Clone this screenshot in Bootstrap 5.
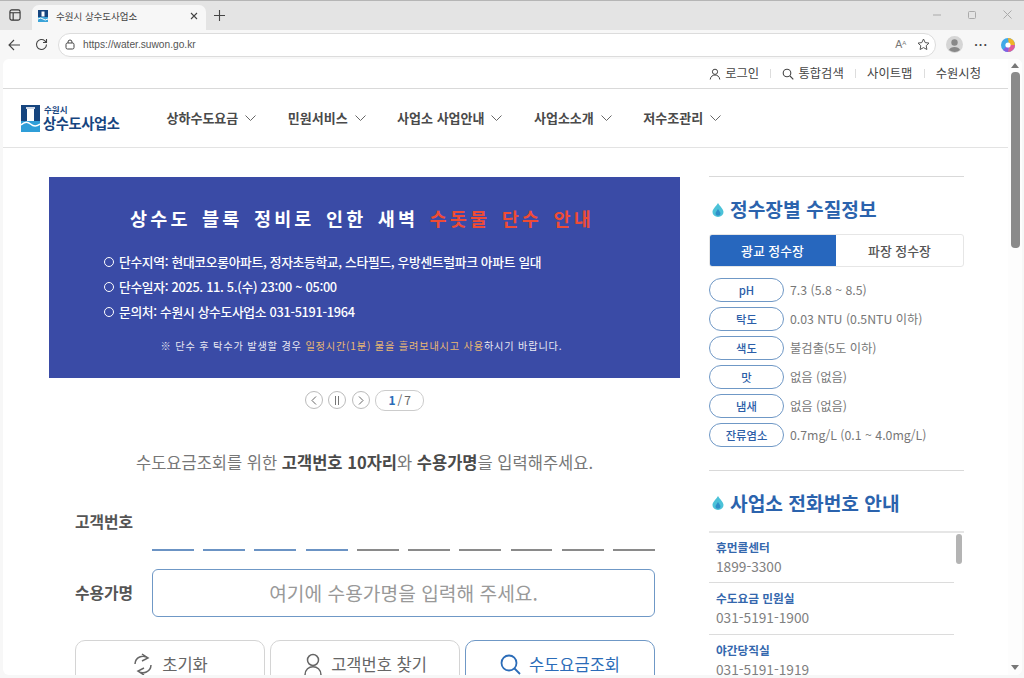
<!DOCTYPE html>
<html lang="ko">
<head>
<meta charset="utf-8">
<title>수원시 상수도사업소</title>
<link rel="stylesheet" href="https://cdn.jsdelivr.net/npm/bootstrap@5.3.2/dist/css/bootstrap.min.css">
<style>
html, body { height: 678px; overflow: hidden; }
body { font-family: "Noto Sans CJK KR", "Noto Sans", sans-serif; background: #f7f7f7; color: #555; }
.win { height: 678px; }
.tabstrip { height: 30px; background: #e4e4e4; border-top: 1px solid #b5b5b5; flex: none; }
.side-btn { width: 32px; padding: 8px 0 0 9px; }
.br-tab { width: 174px; height: 25px; margin-top: 4px; background: #f7f7f7; border-radius: 7px 7px 0 0; font-size: 9.5px; color: #444; padding: 0 8px 3px 6px; }
.tab-plus { margin: 9px 0 0 8px; }
.win-ctrl { gap: 27px; padding: 9px 12px 0 0; }
.toolbar { height: 29px; flex: none; padding: 0 8px; }
.back-ic { margin-right: 14px; }
.urlbox { height: 24px; border: 1px solid #dcdcdc; border-radius: 12px; background: #fff; margin: 0 10px 0 10px; padding: 0 5px 0 6px; font-size: 10.2px; color: #555; font-family: "Liberation Sans", sans-serif; }
.read-ic { font-size: 10.5px; color: #777; margin-right: 11px; }
.read-ic sup { font-size: 6px; }
.avatar-ic { margin-right: 11px; }
.more-ic { font-size: 11px; color: #444; letter-spacing: 1px; font-weight: 700; margin-right: 12px; }
.webview { margin: 0 2px 3px 3px; background: #fff; border-radius: 6px; min-height: 0; overflow: hidden; }
.page-col { min-width: 0; overflow: hidden; }
.utilbar { height: 30px; border-bottom: 1px solid #d9d9d9; font-size: 12.3px; color: #444; padding-right: 27px; flex: none; }
.utilbar .sep { width: 1px; height: 9px; background: #ddd; margin: 0 11.2px; }
.mainnav { height: 59px; border-bottom: 1px solid #e3e3e3; flex: none; padding-left: 18px; }
.logo-txt { color: #16457f; line-height: 1.15; margin-left: 3px; }
.logo-txt small { font-size: 8.5px; font-weight: 700; display: block; margin-left: 1px; }
.logo-txt b { font-size: 14.3px; font-weight: 700; letter-spacing: -.4px; display: block; }
.gnb { margin-left: 47px; gap: 31.5px; font-size: 13px; font-weight: 700; color: #4a4a4a; padding-bottom: 1px; }
.gnb span { gap: 7px; }
.content-wrap { padding: 29px 0 0 46px; gap: 29px; flex: none; }
.leftcol { width: 631px; flex: none; }
.banner { height: 201px; background: #3a4ba6; color: #fff; padding-top: 30px; }
.banner h2 { font-size: 18.5px; font-weight: 700; letter-spacing: 3.2px; word-spacing: 3px; margin: 0 0 20px; padding-right: 5px; text-align: center; }
.banner h2 em { font-style: normal; color: #ef4b35; }
.banner ul { list-style: none; margin: 0 0 0 55px; padding: 0; font-size: 12.75px; font-weight: 500; letter-spacing: -.3px; }
.banner li { height: 25px; display: flex; align-items: center; gap: 5px; }
.banner li i { width: 10px; height: 10px; border: 1.5px solid #fff; border-radius: 50%; }
.banner p { font-size: 10.2px; text-align: center; margin: 14px 0 0; letter-spacing: .8px; color: #e8e8f2; padding-right: 6px; }
.banner p em { font-style: normal; color: #e9b872; }
.slide-ctrl { height: 44px; gap: 5.5px; font-size: 12px; }
.round-btn { width: 18px; height: 18px; border: 1px solid #bbb; border-radius: 50%; background: #fff; display: flex; align-items: center; justify-content: center; }
.count-pill { width: 49px; height: 21px; border: 1px solid #ccc; border-radius: 10px; font-size: 12px; color: #666; }
.count-pill b { color: #2b6cb8; font-weight: 700; margin-right: 2px; }
.count-pill span { margin-right: 2px; }
.intro { font-size: 16.5px; text-align: center; color: #777; margin: 28px 0 0; line-height: 24px; }
.intro b { color: #4a4a4a; font-weight: 700; }
.billform { padding: 0 25px 0 26px; }
.flabel { width: 77px; font-size: 15.8px; font-weight: 700; color: #555; flex: none; }
.digits { gap: 9.4px; height: 45px; }
.digits i { flex: 1; height: 2px; background: #8a8a8a; }
.digits i.on { background: #6b93c4; }
.nameinput { height: 48px; border: 1px solid #6f98c6; border-radius: 6px; font-size: 19.2px; color: #999; }
.name-row { margin-top: 18px; }
.actbtns { gap: 5px; margin-top: 23px; }
.actbtn { width: 190px; height: 50px; border: 1px solid #d4d4d4; border-radius: 10px; font-size: 16.5px; color: #666; gap: 8px; background: #fff; padding-bottom: 2px; }
.actbtn.pri { border-color: #6f98c6; color: #2b6cb8; }
.sidecol { width: 255px; flex: none; margin-top: -1px; }
.sidehr { border-top: 1px solid #d9d9d9; }
.sidehead { font-size: 19.2px; font-weight: 700; color: #2b63ad; gap: 6px; height: 57px; padding: 8px 0 0 3px; }
.sidehead.second { height: 60px; padding-top: 4px; }
.wp-tabs { height: 33px; font-size: 12.9px; font-weight: 500; border: 1px solid #e6e6e6; border-radius: 3px; overflow: hidden; }
.wp-tabs div { flex: 1; color: #555; }
.wp-tabs div.on { background: #2767be; color: #fff; margin: -1px 0 -1px -1px; padding: 1px 0; }
.qlist { margin-top: 11px; gap: 5px; font-size: 12.3px; color: #777; height: 192px; }
.qrow { height: 24px; gap: 6px; }
.qpill { width: 75px; height: 24px; border: 1px solid #6f98c6; border-radius: 12px; color: #2b5ea8; font-weight: 500; font-size: 11.3px; flex: none; }
.telwrap { height: 200px; border-top: 2px solid #e6e6e6; gap: 2px; }
.tellist { width: 245px; flex: none; }
.telitem { height: 52px; padding: 5px 0 0 7px; border-bottom: 1px solid #dcdcdc; line-height: 20px; }
.telitem:first-child { height: 50px; padding-top: 4px; }
.telitem b { display: block; color: #3467ad; font-size: 11.7px; font-weight: 700; }
.telitem span { display: block; font-size: 13.7px; color: #808080; line-height: 19px; }
.tel-thumb { width: 6px; height: 30px; border-radius: 3px; background: #b4b4b4; margin-top: 1px; }
.vscroll { width: 14px; flex: none; background: #fdfdfd; padding: 4px 0 5px; }
.vscroll .thumb { width: 9px; height: 176px; background: #8a8a8a; border-radius: 4px; margin-top: 4px; }
</style>
</head>
<body>
<div class="win d-flex flex-column">
  <div class="tabstrip d-flex align-items-start">
    <div class="side-btn">
      <svg width="12" height="12" viewBox="0 0 13 13" fill="none" stroke="#333" stroke-width="1.2" class="d-block"><rect x="1" y="1" width="11" height="11" rx="2"/><path d="M1 4h11M4.500 4v8"/></svg>
    </div>
    <div class="br-tab d-flex align-items-center">
      <svg width="10" height="12" viewBox="0 0 10 12" class="me-2 flex-none"><rect width="10" height="7" fill="#16457f"/><rect x="3.500" y="1.500" width="3" height="5" fill="#fff"/><rect y="7" width="10" height="5" fill="#3aa3d8"/><path d="M0 9q3-2 5 0t5 0" stroke="#fff" fill="none"/></svg>
      <span class="flex-grow-1">수원시 상수도사업소</span>
      <svg width="8" height="8" viewBox="0 0 8 8" stroke="#444" stroke-width="1.100"><path d="M1 1l6 6M7 1l-6 6"/></svg>
    </div>
    <div class="tab-plus d-flex">
      <svg width="11" height="11" viewBox="0 0 11 11" stroke="#444" stroke-width="1.100"><path d="M5.500 0v11M0 5.500h11"/></svg>
    </div>
    <div class="ms-auto d-flex align-items-center win-ctrl">
      <svg width="8" height="8" viewBox="0 0 8 8" stroke="#aaa"><path d="M0 4h8"/></svg>
      <svg width="8" height="8" viewBox="0 0 8 8" stroke="#aaa" fill="none"><rect x=".5" y=".5" width="7" height="7" rx="1"/></svg>
      <svg width="9" height="9" viewBox="0 0 9 9" stroke="#aaa"><path d="M.5.5l8 8M8.500.5l-8 8"/></svg>
    </div>
  </div>
  <div class="toolbar d-flex align-items-center">
    <svg width="13" height="12" viewBox="0 0 13 12" fill="none" stroke="#444" stroke-width="1.100" class="back-ic"><path d="M12 6H1M6 1L1 6l5 5"/></svg>
    <svg width="13" height="13" viewBox="0 0 13 13" fill="none" stroke="#444" stroke-width="1.100"><path d="M11.500 6.500a5 5 0 1 1-1.600-3.700L11.500 4.500M11.500 1v3.500H8"/></svg>
    <div class="urlbox flex-grow-1 d-flex align-items-center">
      <svg width="10" height="11" viewBox="0 0 10 11" fill="none" stroke="#444" class="me-2"><rect x="1" y="4" width="8" height="6" rx="1.500"/><path d="M3 4V3a2 2 0 0 1 4 0v1"/></svg>
      <span class="flex-grow-1">https://water.suwon.go.kr</span>
      <span class="read-ic">A<sup>A</sup></span>
      <svg width="13" height="13" viewBox="0 0 13 13" fill="none" stroke="#555"><path d="M6.500 1l1.700 3.600 3.800.5-2.800 2.600.7 3.800-3.400-1.900-3.400 1.900.7-3.800L1 5.100l3.800-.5z"/></svg>
    </div>
    <svg width="17" height="17" viewBox="0 0 17 17" class="avatar-ic"><circle cx="8.500" cy="8.500" r="8.500" fill="#d5d5d5"/><circle cx="8.500" cy="6.500" r="3.200" fill="#888"/><path d="M3 14c1-4 10-4 11 0q-5 4-11 0z" fill="#888"/></svg>
    <span class="more-ic lh-1">···</span>
    <svg width="16" height="16" viewBox="0 0 16 16"><circle cx="8" cy="8" r="7" fill="#3fa9e8"/><path d="M8 1a7 7 0 0 1 7 7H9z" fill="#f0b429"/><path d="M15 8a7 7 0 0 1-7 7l1-7z" fill="#e25a9a"/><path d="M8 15a7 7 0 0 1-5-2l5-5z" fill="#8a5ce0"/><circle cx="8" cy="8" r="2.600" fill="#fff"/></svg>
  </div>

  <div class="webview flex-grow-1 d-flex">
    <div class="page-col flex-grow-1 d-flex flex-column">
      <div class="utilbar d-flex align-items-center justify-content-end">
        <svg width="12" height="12" viewBox="0 0 12 12" fill="none" stroke="#444" class="me-1"><circle cx="6" cy="3.800" r="2.600"/><path d="M1.200 11.500c.5-6 9.100-6 9.600 0"/></svg>
        <span>로그인</span><i class="sep"></i>
        <svg width="12" height="12" viewBox="0 0 12 12" fill="none" stroke="#444" stroke-width="1.100" class="me-1"><circle cx="5" cy="5" r="3.800"/><path d="M8 8l3.300 3.300"/></svg>
        <span>통합검색</span><i class="sep"></i>
        <span>사이트맵</span><i class="sep"></i>
        <span>수원시청</span>
      </div>
      <div class="mainnav d-flex align-items-center">
        <svg width="19" height="27" viewBox="0 0 19 27"><rect width="19" height="16" fill="#16457f"/><rect x="6" y="3" width="7" height="13" fill="#fff"/><rect x="5" y="2" width="9" height="2" fill="#cfd8e6"/><rect y="16" width="19" height="11" fill="#2f9ed8"/><path d="M0 20q5-5 9.500-1t9.500 0" stroke="#fff" stroke-width="1.500" fill="none"/></svg>
        <div class="logo-txt"><small>수원시</small><b>상수도사업소</b></div>
        <div class="gnb d-flex">
          <span class="d-flex align-items-center">상하수도요금<svg width="11" height="6" viewBox="0 0 11 6" fill="none" stroke="#666"><path d="M.5.5L5.500 5.500 10.500.5"/></svg></span>
          <span class="d-flex align-items-center">민원서비스<svg width="11" height="6" viewBox="0 0 11 6" fill="none" stroke="#666"><path d="M.5.5L5.500 5.500 10.500.5"/></svg></span>
          <span class="d-flex align-items-center">사업소 사업안내<svg width="11" height="6" viewBox="0 0 11 6" fill="none" stroke="#666"><path d="M.5.5L5.500 5.500 10.500.5"/></svg></span>
          <span class="d-flex align-items-center">사업소소개<svg width="11" height="6" viewBox="0 0 11 6" fill="none" stroke="#666"><path d="M.5.5L5.500 5.500 10.500.5"/></svg></span>
          <span class="d-flex align-items-center">저수조관리<svg width="11" height="6" viewBox="0 0 11 6" fill="none" stroke="#666"><path d="M.5.5L5.500 5.500 10.500.5"/></svg></span>
        </div>
      </div>
      <div class="content-wrap d-flex">
        <div class="leftcol">
          <div class="banner">
            <h2>상수도 블록 정비로 인한 새벽 <em>수돗물 단수 안내</em></h2>
            <ul>
              <li><i></i>단수지역: 현대코오롱아파트, 정자초등학교, 스타필드, 우방센트럴파크 아파트 일대</li>
              <li><i></i>단수일자: 2025. 11. 5.(수) 23:00 ~ 05:00</li>
              <li><i></i>문의처: 수원시 상수도사업소 031-5191-1964</li>
            </ul>
            <p>※ 단수 후 탁수가 발생할 경우 <em>일정시간(1분) 물을 흘려보내시고 사용</em>하시기 바랍니다.</p>
          </div>
          <div class="slide-ctrl d-flex align-items-center justify-content-center">
            <span class="round-btn"><svg width="6" height="9" viewBox="0 0 6 9" fill="none" stroke="#666"><path d="M5 .5L1 4.500l4 4"/></svg></span>
            <span class="round-btn"><svg width="6" height="9" viewBox="0 0 6 9" fill="none" stroke="#777"><path d="M1.500 0v9M4.500 0v9"/></svg></span>
            <span class="round-btn"><svg width="6" height="9" viewBox="0 0 6 9" fill="none" stroke="#666"><path d="M1 .5l4 4-4 4"/></svg></span>
            <span class="count-pill d-flex align-items-center justify-content-center"><b>1</b><span>/</span>7</span>
          </div>
          <p class="intro">수도요금조회를 위한 <b>고객번호 10자리</b>와 <b>수용가명</b>을 입력해주세요.</p>
          <div class="billform">
            <div class="d-flex mt-4 pt-2">
              <div class="flabel lh-base pt-1">고객번호</div>
              <div class="digits d-flex align-items-end flex-grow-1">
                <i class="on"></i><i class="on"></i><i class="on"></i><i class="on"></i><i></i><i></i><i></i><i></i><i></i><i></i>
              </div>
            </div>
            <div class="name-row d-flex align-items-center">
              <div class="flabel">수용가명</div>
              <div class="nameinput flex-grow-1 d-flex align-items-center justify-content-center">여기에 수용가명을 입력해 주세요.</div>
            </div>
            <div class="actbtns d-flex">
              <div class="actbtn d-flex align-items-center justify-content-center">
                <svg width="22" height="23" viewBox="0 0 22 23" fill="none" stroke="#666" stroke-width="1.500"><path d="M3 11a8 8 0 0 1 13-6M19 12a8 8 0 0 1-13 6M10 1l6 4-6 3M12 22l-6-4 6-3"/></svg>초기화
              </div>
              <div class="actbtn d-flex align-items-center justify-content-center">
                <svg width="20" height="22" viewBox="0 0 20 22" fill="none" stroke="#666" stroke-width="1.500"><circle cx="10" cy="7" r="5.500"/><path d="M2 22c0-11 16-11 16 0"/></svg>고객번호 찾기
              </div>
              <div class="actbtn pri d-flex align-items-center justify-content-center">
                <svg width="21" height="21" viewBox="0 0 21 21" fill="none" stroke="#2b6cb8" stroke-width="1.800"><circle cx="9" cy="9" r="7.500"/><path d="M14.500 14.500L20 20"/></svg>수도요금조회
              </div>
            </div>
          </div>
        </div>
        <div class="sidecol">
          <div class="sidehr"></div>
          <div class="sidehead d-flex align-items-center">
            <svg width="12" height="14" viewBox="0 0 12 14"><path d="M6 0C3.500 4 .5 6 .5 9a5.500 5 0 0 0 11 0C11.500 6 8.500 4 6 0z" fill="#4cc2d8"/><path d="M6 6C5 8 3.500 9 3.500 10.500a2.500 2.300 0 0 0 5 0C8.500 9 7 8 6 6z" fill="#2f8fc8"/></svg>
            <span>정수장별 수질정보</span>
          </div>
          <div class="wp-tabs d-flex text-center">
            <div class="on d-flex align-items-center justify-content-center">광교 정수장</div>
            <div class="d-flex align-items-center justify-content-center">파장 정수장</div>
          </div>
          <div class="qlist d-flex flex-column">
            <div class="qrow d-flex align-items-center"><span class="qpill d-flex align-items-center justify-content-center">pH</span>7.3 (5.8 ~ 8.5)</div>
            <div class="qrow d-flex align-items-center"><span class="qpill d-flex align-items-center justify-content-center">탁도</span>0.03 NTU (0.5NTU 이하)</div>
            <div class="qrow d-flex align-items-center"><span class="qpill d-flex align-items-center justify-content-center">색도</span>불검출(5도 이하)</div>
            <div class="qrow d-flex align-items-center"><span class="qpill d-flex align-items-center justify-content-center">맛</span>없음 (없음)</div>
            <div class="qrow d-flex align-items-center"><span class="qpill d-flex align-items-center justify-content-center">냄새</span>없음 (없음)</div>
            <div class="qrow d-flex align-items-center"><span class="qpill d-flex align-items-center justify-content-center">잔류염소</span>0.7mg/L (0.1 ~ 4.0mg/L)</div>
          </div>
          <div class="sidehr"></div>
          <div class="sidehead second d-flex align-items-center">
            <svg width="12" height="14" viewBox="0 0 12 14"><path d="M6 0C3.500 4 .5 6 .5 9a5.500 5 0 0 0 11 0C11.500 6 8.500 4 6 0z" fill="#4cc2d8"/><path d="M6 6C5 8 3.500 9 3.500 10.500a2.500 2.300 0 0 0 5 0C8.500 9 7 8 6 6z" fill="#2f8fc8"/></svg>
            <span>사업소 전화번호 안내</span>
          </div>
          <div class="telwrap d-flex">
            <div class="tellist">
              <div class="telitem"><b>휴먼콜센터</b><span>1899-3300</span></div>
              <div class="telitem"><b>수도요금 민원실</b><span>031-5191-1900</span></div>
              <div class="telitem"><b>야간당직실</b><span>031-5191-1919</span></div>
            </div>
            <div class="tel-thumb"></div>
          </div>
        </div>
      </div>
    </div>
    <div class="vscroll d-flex flex-column align-items-center">
      <svg width="8" height="5" viewBox="0 0 8 5"><path d="M4 0l4 5H0z" fill="#777"/></svg>
      <div class="thumb"></div>
      <svg width="8" height="5" viewBox="0 0 8 5" class="mt-auto"><path d="M4 5l4-5H0z" fill="#777"/></svg>
    </div>
  </div>
</div>
<script src="https://cdn.jsdelivr.net/npm/bootstrap@5.3.2/dist/js/bootstrap.bundle.min.js"></script>
</body>
</html>
